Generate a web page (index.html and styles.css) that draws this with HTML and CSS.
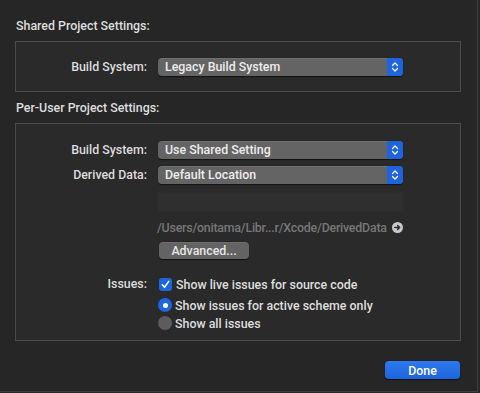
FILE: index.html
```html
<!DOCTYPE html>
<html>
<head>
<meta charset="utf-8">
<link rel="stylesheet" href="styles.css">
</head>
<body>
<div class="window">
  <div class="heading">Shared Project Settings:</div>
  <div class="box box-shared">
    <div class="grid">
      <div class="label">Build System:</div>
      <div class="popup"><span class="popup-text">Legacy Build System</span><span class="popup-arrows"><svg width="8" height="12" viewBox="0 0 8 12"><path d="M1.5 4.5 L4 2 L6.5 4.5 M1.5 7.5 L4 10 L6.5 7.5" fill="none" stroke="#fff" stroke-width="1.3" stroke-linecap="round" stroke-linejoin="round"/></svg></span></div>
    </div>
  </div>
  <div class="heading heading-2">Per-User Project Settings:</div>
  <div class="box box-user">
    <div class="grid">
      <div class="label">Build System:</div>
      <div class="popup"><span class="popup-text">Use Shared Setting</span><span class="popup-arrows"><svg width="8" height="12" viewBox="0 0 8 12"><path d="M1.5 4.5 L4 2 L6.5 4.5 M1.5 7.5 L4 10 L6.5 7.5" fill="none" stroke="#fff" stroke-width="1.3" stroke-linecap="round" stroke-linejoin="round"/></svg></span></div>
      <div class="label">Derived Data:</div>
      <div class="popup"><span class="popup-text">Default Location</span><span class="popup-arrows"><svg width="8" height="12" viewBox="0 0 8 12"><path d="M1.5 4.5 L4 2 L6.5 4.5 M1.5 7.5 L4 10 L6.5 7.5" fill="none" stroke="#fff" stroke-width="1.3" stroke-linecap="round" stroke-linejoin="round"/></svg></span></div>
      <div class="spacer"></div>
      <div class="textfield"></div>
      <div class="spacer"></div>
      <div class="path"><span>/Users/onitama/Libr...r/Xcode/DerivedData</span><svg class="path-icon" width="11" height="11" viewBox="0 0 11 11"><circle cx="5.5" cy="5.5" r="5.5" fill="#c9c9c9"/><path d="M2.8 5.5 H7.6 M5.6 3.4 L7.7 5.5 L5.6 7.6" fill="none" stroke="#2c2c2c" stroke-width="1.4" stroke-linecap="round" stroke-linejoin="round"/></svg></div>
      <div class="spacer"></div>
      <div class="adv-row"><button class="btn">Advanced...</button></div>
      <div class="label label-issues">Issues:</div>
      <div class="options">
        <div class="opt opt-check"><span class="checkbox"><svg width="13" height="13" viewBox="0 0 13 13"><path d="M3.3 6.8 L5.5 9.3 L9.8 3.4" fill="none" stroke="#fff" stroke-width="1.6" stroke-linecap="round" stroke-linejoin="round"/></svg></span><span>Show live issues for source code</span></div>
        <div class="opt opt-radio1"><span class="radio on"><span class="dot"></span></span><span>Show issues for active scheme only</span></div>
        <div class="opt"><span class="radio"></span><span>Show all issues</span></div>
      </div>
    </div>
  </div>
  <div class="footer"><button class="done">Done</button></div>
</div>
</body>
</html>
```
FILE: styles.css
```css
html, body {
  margin: 0;
  padding: 0;
  background: #262626;
}
body {
  font-family: Roboto, "Noto Sans", "Liberation Sans", sans-serif;
  font-size: 12.4px;
  color: #dddddd;
}
.window {
  width: 478px;
  height: 392px;
  box-sizing: border-box;
  border-right: 1px solid #3e3e3e;
  border-bottom: 1px solid #3e3e3e;
  padding-top: 18px;
  background: #262626;
}
.heading {
  margin-left: 16px;
  line-height: 16px;
  height: 16px;
  font-weight: 500;
  color: #dedede;
}
.heading-2 {
  margin-top: 8px;
}
.box {
  margin: 7px 16px 0 15px;
  border: 1px solid #4b4b4b;
  background: #2a2a2a;
}
.box-shared {
  padding: 16px 0 15px;
}
.box-user {
  padding: 17px 0 15px;
  height: 218px;
  box-sizing: border-box;
}
.grid {
  display: grid;
  grid-template-columns: 131px 245px;
  column-gap: 11px;
  row-gap: 7px;
  align-items: center;
}
.label {
  text-align: right;
  font-weight: 500;
  color: #dcdcdc;
  line-height: 18px;
}
.popup {
  height: 18px;
  display: flex;
  align-items: stretch;
  border-radius: 4px;
  background: #646464;
  box-shadow: inset 0 1px 0 rgba(255,255,255,0.08), 0 0.5px 1px rgba(0,0,0,0.6);
  overflow: hidden;
}
.popup-text {
  flex: 1;
  padding-left: 7px;
  line-height: 18px;
  font-weight: 500;
  color: #ececec;
}
.popup-arrows {
  width: 16px;
  background: #1e64dc;
  display: flex;
  align-items: center;
  justify-content: center;
}
.spacer {
  height: 1px;
}
.textfield {
  height: 20px;
  margin-left: -1px;
  margin-right: -1px;
  margin-top: 1px;
  background: #2f2f2f;
  border: 1px solid #2c2c2c;
  box-sizing: border-box;
}
.path {
  display: flex;
  align-items: center;
  gap: 5px;
  margin-left: -1px;
  height: 16px;
  color: #777777;
  font-weight: 500;
  letter-spacing: -0.22px;
  white-space: nowrap;
}
.path-icon {
  flex: none;
}
.adv-row {
  display: flex;
}
.btn {
  font-family: inherit;
  font-size: 12.4px;
  font-weight: 500;
  color: #e6e6e6;
  background: #636363;
  border: none;
  border-radius: 4px;
  height: 17px;
  width: 90px;
  margin-left: 1px;
  padding: 0;
  box-shadow: inset 0 1px 0 rgba(255,255,255,0.08), 0 0.5px 1px rgba(0,0,0,0.6);
}
.label-issues {
  align-self: start;
  margin-top: 9px;
}
.options {
  display: flex;
  flex-direction: column;
  margin-top: 9px;
  margin-left: 1px;
}
.opt {
  display: flex;
  align-items: center;
  gap: 4px;
  height: 18px;
  font-weight: 500;
  color: #dedede;
}
.opt-radio1 {
  margin-top: 3px;
}
.checkbox {
  width: 13px;
  height: 13px;
  border-radius: 3px;
  background: #1c66dd;
  display: flex;
  flex: none;
}
.radio {
  width: 14px;
  height: 14px;
  border-radius: 50%;
  background: #5c5c5c;
  display: flex;
  align-items: center;
  justify-content: center;
  flex: none;
  margin-left: -1px;
  margin-right: -1px;
}
.radio.on {
  background: #1d66de;
}
.dot {
  width: 5px;
  height: 5px;
  border-radius: 50%;
  background: #fff;
}
.footer {
  display: flex;
  justify-content: flex-end;
  padding: 20px 17px 0 0;
}
.done {
  font-family: inherit;
  font-size: 12.4px;
  font-weight: 500;
  color: #ffffff;
  width: 75px;
  height: 18px;
  padding: 0;
  border: none;
  border-radius: 4px;
  background: linear-gradient(#2f7af0, #1c64dc);
  box-shadow: 0 0.5px 1px rgba(0,0,0,0.6);
}
```
